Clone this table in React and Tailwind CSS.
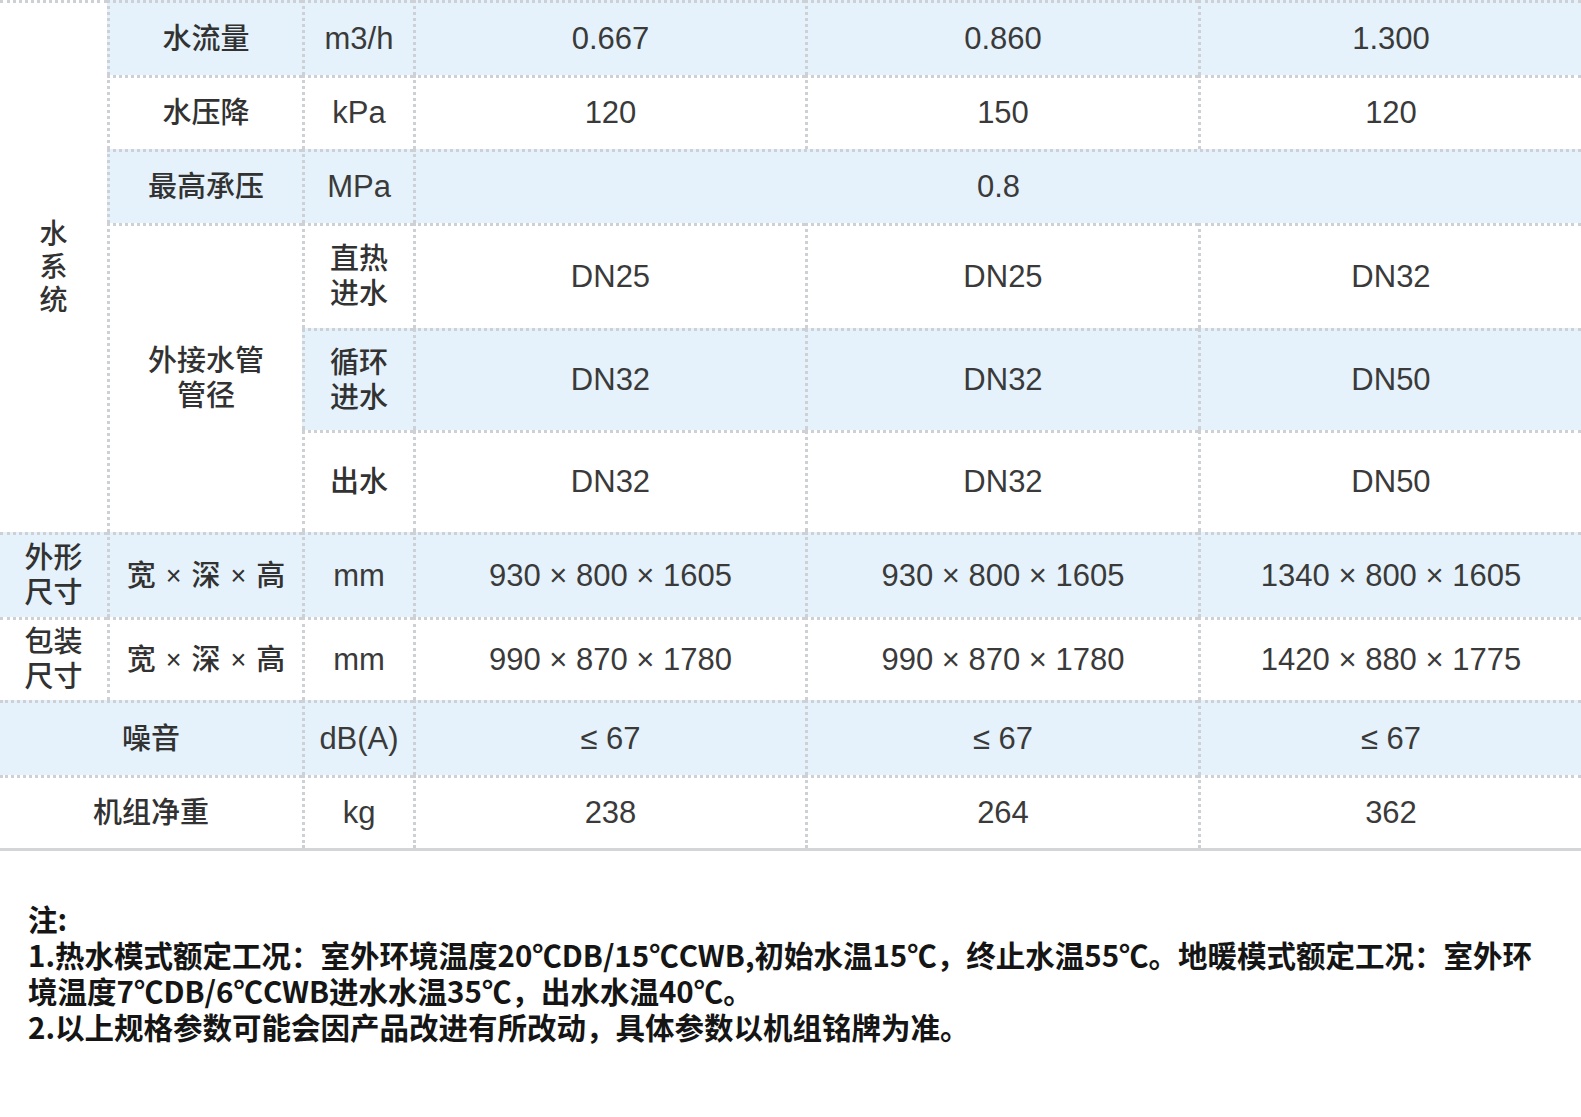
import React from "react";

const COL = { 1: "col-start-1", 2: "col-start-2", 3: "col-start-3", 4: "col-start-4", 5: "col-start-5", 6: "col-start-6" };
const ROW = { 1: "row-start-1", 2: "row-start-2", 3: "row-start-3", 4: "row-start-4", 5: "row-start-5", 6: "row-start-6", 7: "row-start-7", 8: "row-start-8", 9: "row-start-9", 10: "row-start-10" };
const CS = { 1: "", 2: "col-span-2", 3: "col-span-3" };
const RS = { 1: "", 3: "row-span-3", 6: "row-span-6" };

function Cell({ c, r, cs = 1, rs = 1, blue, zh, children }) {
  return (
    <div
      className={[
        COL[c],
        ROW[r],
        CS[cs],
        RS[rs],
        "flex items-center justify-center text-center border-t-[3px] border-dotted border-[#cdd1d5]",
        c === 1 ? "" : "border-l-[3px]",
        blue ? "bg-[#e5f2fb]" : "bg-white",
        zh ? "text-[29px] font-medium leading-[35px] text-[#323232]" : "text-[31px] text-[#3a3a3a]",
      ].join(" ")}
    >
      {children}
    </div>
  );
}

function WDH() {
  return (
    <div className="flex items-center gap-[10px]">
      <span>宽</span>
      <span className="text-[27px]" style={{ fontFamily: "'Liberation Sans', sans-serif" }}>×</span>
      <span>深</span>
      <span className="text-[27px]" style={{ fontFamily: "'Liberation Sans', sans-serif" }}>×</span>
      <span>高</span>
    </div>
  );
}

const X = " × ";

export default function App() {
  const vals = [
    { r: 1, blue: true, v: ["0.667", "0.860", "1.300"] },
    { r: 2, blue: false, v: ["120", "150", "120"] },
    { r: 4, blue: false, v: ["DN25", "DN25", "DN32"] },
    { r: 5, blue: true, v: ["DN32", "DN32", "DN50"] },
    { r: 6, blue: false, v: ["DN32", "DN32", "DN50"] },
    { r: 7, blue: true, v: ["930" + X + "800" + X + "1605", "930" + X + "800" + X + "1605", "1340" + X + "800" + X + "1605"] },
    { r: 8, blue: false, v: ["990" + X + "870" + X + "1780", "990" + X + "870" + X + "1780", "1420" + X + "880" + X + "1775"] },
    { r: 9, blue: true, v: ["≤ 67", "≤ 67", "≤ 67"] },
    { r: 10, blue: false, v: ["238", "264", "362"] },
  ];
  return (
    <div
      className="w-[1581px] h-[1117px] bg-white overflow-hidden"
      style={{ fontFamily: "'Liberation Sans', 'Noto Sans CJK SC', sans-serif" }}
    >
      <div className="grid grid-cols-[107px_195px_111px_392px_393px_1fr] grid-rows-[75px_74px_74px_105px_102px_102px_85px_83px_75px_73px] border-b-[3px] border-[#d3d5d7]">
        <Cell c={1} r={1} rs={6} zh>
          <div className="leading-[33px] text-[28px]">水<br />系<br />统</div>
        </Cell>
        <Cell c={2} r={1} blue zh>水流量</Cell>
        <Cell c={3} r={1} blue>m3/h</Cell>
        <Cell c={2} r={2} zh>水压降</Cell>
        <Cell c={3} r={2}>kPa</Cell>
        <Cell c={2} r={3} blue zh>最高承压</Cell>
        <Cell c={3} r={3} blue>MPa</Cell>
        <Cell c={4} r={3} cs={3} blue>0.8</Cell>
        <Cell c={2} r={4} rs={3} zh>
          <div>外接水管<br />管径</div>
        </Cell>
        <Cell c={3} r={4} zh><div>直热<br />进水</div></Cell>
        <Cell c={3} r={5} blue zh><div>循环<br />进水</div></Cell>
        <Cell c={3} r={6} zh>出水</Cell>
        <Cell c={1} r={7} blue zh><div>外形<br />尺寸</div></Cell>
        <Cell c={2} r={7} blue zh><WDH /></Cell>
        <Cell c={3} r={7} blue>mm</Cell>
        <Cell c={1} r={8} zh><div>包装<br />尺寸</div></Cell>
        <Cell c={2} r={8} zh><WDH /></Cell>
        <Cell c={3} r={8}>mm</Cell>
        <Cell c={1} r={9} cs={2} blue zh>噪音</Cell>
        <Cell c={3} r={9} blue>dB(A)</Cell>
        <Cell c={1} r={10} cs={2} zh>机组净重</Cell>
        <Cell c={3} r={10}>kg</Cell>
        {vals.map((row) =>
          row.v.map((t, i) => (
            <Cell key={row.r + "-" + i} c={4 + i} r={row.r} blue={row.blue}>
              <span className="whitespace-pre">{t}</span>
            </Cell>
          ))
        )}
      </div>
      <div
        className="pt-[49px] pl-[28px] text-[29.5px] font-bold leading-[36px] text-[#151515] whitespace-nowrap"
        style={{ fontFamily: "'Noto Sans CJK SC', sans-serif" }}
      >
        <div>注:</div>
        <div>1.热水模式额定工况：室外环境温度20℃DB/15℃CWB,初始水温15℃，终止水温55℃。地暖模式额定工况：室外环</div>
        <div>境温度7℃DB/6℃CWB进水水温35℃，出水水温40℃。</div>
        <div>2.以上规格参数可能会因产品改进有所改动，具体参数以机组铭牌为准。</div>
      </div>
    </div>
  );
}
